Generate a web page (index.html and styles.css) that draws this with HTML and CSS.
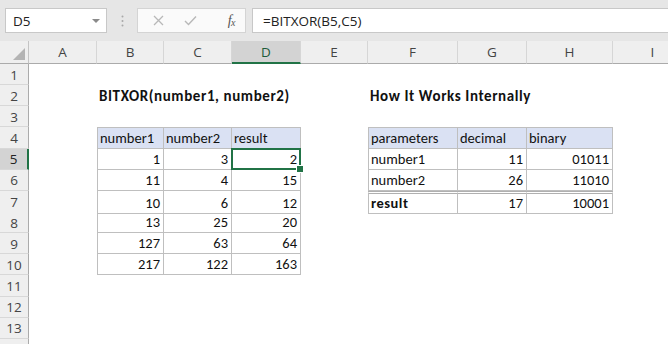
FILE: index.html
```html
<!DOCTYPE html>
<html>
<head>
<meta charset="utf-8">
<link rel="stylesheet" href="styles.css">
</head>
<body>
<div class="app">
  <div class="fbar">
    <div class="namebox">
      <span class="ref">D5</span>
      <svg class="dd" width="8" height="5" viewBox="0 0 8 5"><path d="M0 0h8L4 4z" fill="#8a8a8a"/></svg>
    </div>
    <div class="grip">
      <svg width="3" height="12" viewBox="0 0 3 12"><circle cx="1.5" cy="1.5" r="1" fill="#a8a8a8"/><circle cx="1.5" cy="6" r="1" fill="#a8a8a8"/><circle cx="1.5" cy="10.5" r="1" fill="#a8a8a8"/></svg>
    </div>
    <div class="btns">
      <svg class="ico" width="11" height="11" viewBox="0 0 11 11"><path d="M1 1l9 9M10 1l-9 9" stroke="#b8b8b8" stroke-width="1.3" fill="none"/></svg>
      <svg class="ico" width="13" height="11" viewBox="0 0 13 11"><path d="M1 6l3.5 3.5L12 1.5" stroke="#b8b8b8" stroke-width="1.4" fill="none"/></svg>
      <span class="fx">f<sub>x</sub></span>
    </div>
    <div class="formula">=BITXOR(B5,C5)</div>
  </div>

  <div class="sheet">
    <div class="row hdr">
      <div class="corner"><svg width="12" height="12" viewBox="0 0 12 12"><path d="M12 0V12H0z" fill="#b4b4b4"/></svg></div>
      <div class="ch">A</div>
      <div class="ch">B</div>
      <div class="ch">C</div>
      <div class="ch on">D</div>
      <div class="ch">E</div>
      <div class="ch">F</div>
      <div class="ch">G</div>
      <div class="ch">H</div>
      <div class="ch">I</div>
    </div>

    <div class="row"><div class="rh">1</div></div>
    <div class="row">
      <div class="rh">2</div>
      <div class="c cB title">BITXOR(number1, number2)</div>
      <div class="c cF title">How It Works Internally</div>
    </div>
    <div class="row"><div class="rh">3</div></div>
    <div class="row">
      <div class="rh">4</div>
      <div class="c cB t th first top">number1</div>
      <div class="c cC t th top">number2</div>
      <div class="c cD t th top">result</div>
      <div class="c cF t th first top">parameters</div>
      <div class="c cG t th top">decimal</div>
      <div class="c cH t th top">binary</div>
    </div>
    <div class="row">
      <div class="rh on">5</div>
      <div class="c cB t first num">1</div>
      <div class="c cC t num">3</div>
      <div class="c cD t num sel">2</div>
      <div class="c cF t first">number1</div>
      <div class="c cG t num">11</div>
      <div class="c cH t num">01011</div>
    </div>
    <div class="row">
      <div class="rh">6</div>
      <div class="c cB t first num">11</div>
      <div class="c cC t num">4</div>
      <div class="c cD t num">15</div>
      <div class="c cF t first">number2</div>
      <div class="c cG t num">26</div>
      <div class="c cH t num">11010</div>
    </div>
    <div class="row">
      <div class="rh">7</div>
      <div class="c cB t first num">10</div>
      <div class="c cC t num">6</div>
      <div class="c cD t num">12</div>
      <div class="c cF t first tot"><b class="bold">result</b></div>
      <div class="c cG t num tot">17</div>
      <div class="c cH t num tot">10001</div>
    </div>
    <div class="row">
      <div class="rh">8</div>
      <div class="c cB t first num">13</div>
      <div class="c cC t num">25</div>
      <div class="c cD t num">20</div>
    </div>
    <div class="row">
      <div class="rh">9</div>
      <div class="c cB t first num">127</div>
      <div class="c cC t num">63</div>
      <div class="c cD t num">64</div>
    </div>
    <div class="row">
      <div class="rh">10</div>
      <div class="c cB t first num">217</div>
      <div class="c cC t num">122</div>
      <div class="c cD t num">163</div>
    </div>
    <div class="row"><div class="rh">11</div></div>
    <div class="row"><div class="rh">12</div></div>
    <div class="row"><div class="rh">13</div></div>
    <div class="row"><div class="rh"></div></div>
  </div>
</div>
</body>
</html>
```

FILE: styles.css
```css
* { box-sizing: border-box; }
html, body { margin: 0; padding: 0; background: #fff; }
body { width: 668px; height: 344px; overflow: hidden; }

.app { width: 668px; height: 344px; overflow: hidden; }

.fbar {
  height: 41px;
  background: #e6e6e6;
  display: flex;
  align-items: center;
  padding: 0 0 0 5px;
}
.namebox {
  width: 102px;
  height: 25px;
  background: #fff;
  border: 1px solid #c8c8c8;
  display: flex;
  align-items: center;
  justify-content: space-between;
  padding: 0 6px 0 7px;
  font-family: "Open Sans", "Noto Sans", sans-serif;
  font-size: 13.5px;
  color: #222;
}
.namebox .dd { margin-top: 1px; }
.grip {
  width: 30px;
  display: flex;
  justify-content: center;
  align-items: center;
}
.btns {
  width: 109px;
  height: 25px;
  background: #fafafa;
  border: 1px solid #d4d4d4;
  display: flex;
  align-items: center;
  padding: 0 10px 0 15px;
}
.btns .ico:first-child { margin-right: 20px; }
.btns .fx {
  margin-left: auto;
  font-family: "Liberation Serif", serif;
  font-style: italic;
  font-size: 14px;
  color: #555;
  letter-spacing: -0.5px;
}
.btns .fx sub { font-size: 10px; vertical-align: -1px; }
.formula {
  margin-left: 6px;
  flex: 1;
  height: 25px;
  background: #fff;
  border: 1px solid #c8c8c8;
  border-right: 0;
  display: flex;
  align-items: center;
  padding-left: 10px;
  font-family: "Open Sans", "Noto Sans", sans-serif;
  font-size: 13.5px;
  color: #222;
}

.sheet { width: 700px; }
.row {
  display: grid;
  grid-template-columns: 29px 68px 67px 68px 69px 67px 90px 69px 86px 80px;
  height: 21.15px;
}
.row.hdr { height: 23px; }

.corner {
  grid-column: 1;
  background: #efefef;
  border-right: 1px solid #c4c4c4;
  border-bottom: 1px solid #ababab;
  display: flex;
  align-items: flex-end;
  justify-content: flex-end;
  padding: 0 3px 3px 0;
}
.ch {
  background: #efefef;
  border-right: 1px solid #d6d6d6;
  border-bottom: 1px solid #ababab;
  display: flex;
  align-items: center;
  justify-content: center;
  font-family: "Open Sans", "Noto Sans", sans-serif;
  font-size: 13.5px;
  color: #444;
}
.ch.on {
  background: #d3d3d3;
  border-bottom: 2px solid #217346;
  color: #1d5c3a;
}
.rh {
  grid-column: 1;
  background: #efefef;
  border-right: 1px solid #ababab;
  border-bottom: 1px solid #d8d8d8;
  display: flex;
  align-items: center;
  justify-content: center;
  font-family: "Open Sans", "Noto Sans", sans-serif;
  font-size: 13.5px;
  color: #444;
  padding-top: 1px;
}
.rh.on {
  background: #d3d3d3;
  border-right: 2px solid #217346;
  color: #222;
}

.c {
  font-family: "Carlito", "Lato", sans-serif;
  font-size: 14.5px;
  color: #111;
  display: flex;
  align-items: flex-end;
  padding: 0 3px 1px 2px;
  white-space: nowrap;
  line-height: 18px;
}
.cB { grid-column: 3; }
.cC { grid-column: 4; }
.cD { grid-column: 5; }
.cF { grid-column: 7; }
.cG { grid-column: 8; }
.cH { grid-column: 9; }
.title {
  font-weight: bold;
  grid-column-end: span 3;
  font-size: 15px;
  letter-spacing: 0.6px;
}
.bold {
  font-weight: bold;
  font-size: 14.5px;
  letter-spacing: 0.5px;
}

.t {
  border-right: 1px solid #bfbfbf;
  border-bottom: 1px solid #bfbfbf;
}
.t.first { border-left: 1px solid #bfbfbf; }
.t.top { border-top: 1px solid #bfbfbf; }
.th { background: #dae1f3; }
.num { justify-content: flex-end; }
.tot { border-top: 3px double #b0b0b0; }

.sel { position: relative; }
.sel::after {
  content: "";
  position: absolute;
  left: -1px; top: -1px; right: -1px; bottom: -1px;
  border: 2px solid #217346;
}
.sel::before {
  content: "";
  position: absolute;
  right: -4px; bottom: -4px;
  width: 6px; height: 6px;
  background: #217346;
  border: 1px solid #fff;
  z-index: 2;
}
```
